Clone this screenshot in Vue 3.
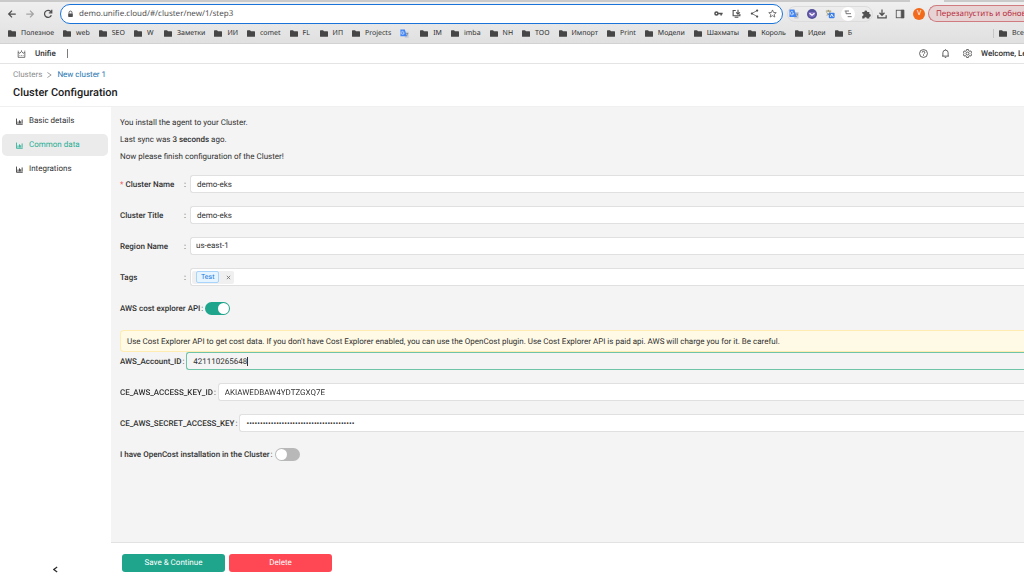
<script setup>
import { ref, onMounted } from 'vue'

const bookmarks = [
  'Полезное', 'web', 'SEO', 'W', 'Заметки', 'ИИ', 'comet', 'FL', 'ИП', 'Projects', null,
  'IM', 'imba', 'NH', 'ТОО', 'Импорт', 'Print', 'Модели', 'Шахматы', 'Король', 'Идеи', 'Б'
]
const menu = [
  { title: 'Basic details', active: false },
  { title: 'Common data', active: true },
  { title: 'Integrations', active: false }
]
const url = ref('demo.unifie.cloud/#/cluster/new/1/step3')
const name = ref('demo-eks')
const title = ref('demo-eks')
const region = ref('us-east-1')
const costExplorer = ref(true)
const openCost = ref(false)
const accountId = ref('421110265648')
const accessKey = ref('AKIAWEDBAW4YDTZGXQ7E')
const secretKey = ref('0000000000000000000000000000000000000000')
const accountInput = ref(null)

onMounted(() => {
  const el = accountInput.value
  el.focus()
  el.setSelectionRange(el.value.length, el.value.length)
})
</script>

<template>
  <div class="window">
    <header class="chrome">
      <div class="tabstrip"><span class="tab"></span></div>
      <div class="toolbar">
        <div class="nav">
          <button aria-label="Back"><svg viewBox="0 0 24 24"><path d="M21 12H4M12 4l-8 8 8 8" /></svg></button>
          <button aria-label="Forward" class="dim"><svg viewBox="0 0 24 24"><path d="M3 12h17M12 4l8 8-8 8" /></svg></button>
          <button aria-label="Reload"><svg viewBox="0 0 24 24"><path d="M20 15a8.500 8.500 0 1 1-1.500-9L21 8.500M21 2v7h-7" /></svg></button>
        </div>
        <div class="omnibox">
          <svg class="lock" viewBox="0 0 24 24"><path d="M7 11V7a5 5 0 0 1 10 0v4" fill="none" stroke="currentColor" stroke-width="3" /><rect x="4" y="10" width="16" height="12" rx="2" fill="currentColor" /></svg>
          <input v-model="url" aria-label="Address" />
          <button aria-label="Passwords"><svg viewBox="0 0 24 24"><circle cx="6.500" cy="12" r="4" stroke-width="4" /><path d="M11 12h12M19 12v5" stroke-width="4" /></svg></button>
          <button aria-label="Install"><svg viewBox="0 0 24 24"><path d="M10 4H3v14h18v-5M7 22h10M16 2v11M11 9l5 5 5-5" stroke-width="3" /></svg></button>
          <button aria-label="Share"><svg viewBox="0 0 24 24"><path d="M19 4L5 12l14 8" stroke-width="2" /><g fill="currentColor" stroke="none"><circle cx="19" cy="4" r="3" /><circle cx="5" cy="12" r="3" /><circle cx="19" cy="20" r="3" /></g></svg></button>
          <button aria-label="Bookmark"><svg viewBox="0 0 24 24"><path d="M12 2.500l2.800 6.700 7.200.6-5.500 4.700 1.700 7-6.200-3.800-6.200 3.800 1.700-7L2 9.800l7.200-.6z" stroke-width="2" /></svg></button>
        </div>
        <div class="extensions">
          <button aria-label="Translate"><svg viewBox="0 0 24 24"><path d="M9 7h14v16H13z" fill="#c4cad4" stroke="none" /><path d="M1 1h12l5 18H1z" fill="#4285f4" stroke="none" /><path d="M11 10a4 4 0 1 1-1.500-3M7 10h4" stroke="#fff" stroke-width="1.500" /><path d="M16 12h6M20 12c0 3-1 5-3 7" stroke="#61718a" stroke-width="1.500" /></svg></button>
          <button aria-label="Pocket"><svg viewBox="0 0 24 24"><circle cx="12" cy="12" r="12" fill="#53509c" stroke="none" /><path d="M4 7h16v5a8 8 0 0 1-16 0z" fill="#7d6bbd" stroke="none" /><path d="M6 10l6 5 6-5" stroke="#fff" stroke-width="3" /></svg></button>
          <button aria-label="Dictionary"><svg viewBox="0 0 24 24"><path d="M2 5h13M8 2v4M4 15c5-2 8-5 8-9M4 8c2 4 5 6 8 7" stroke="#8c8352" stroke-width="2" /><rect x="9" y="9" width="14" height="13" rx="2" fill="#3c7ee8" stroke="none" /><path d="M13 19l3-7 4 7" stroke="#fff" stroke-width="2" /></svg></button>
          <button aria-label="Outline" class="round"><svg viewBox="0 0 24 24"><path d="M2 3h13M8 11h13M11 20h12M6 3v8h4" stroke="#7b7b7b" /></svg></button>
          <button aria-label="Extensions"><svg viewBox="0 0 24 24"><path d="M3 7h5a3.500 3.500 0 1 1 7 0h5v5a3.500 3.500 0 1 1 0 7v4h-6a3 3 0 1 0-6 0H3v-6a3 3 0 1 0 0-6z" fill="currentColor" stroke="none" /></svg></button>
        </div>
        <div class="tools">
          <button aria-label="Downloads"><svg viewBox="0 0 24 24"><path d="M12 1v14M6 9l6 6 6-6M2 15v6h20v-6" /></svg></button>
          <button aria-label="Side panel"><svg viewBox="0 0 24 24"><rect x="3" y="3" width="18" height="18" stroke-width="2" /><path d="M15 3h6v18h-6z" fill="currentColor" stroke-width="2" /></svg></button>
          <button aria-label="Profile" class="avatar">V</button>
        </div>
        <button class="restart">Перезапустить и обновить</button>
      </div>
      <nav class="bookmarks" aria-label="Bookmarks">
        <template v-for="(b, i) in bookmarks" :key="i">
          <a v-if="b" href="#"><svg viewBox="0 0 24 20"><path d="M0 2q0-2 2-2h7l3 3h10q2 0 2 2v13q0 2-2 2H2q-2 0-2-2z" fill="currentColor" /></svg>{{ b }}</a>
          <a v-else href="#" class="site" aria-label="Translate"><svg viewBox="0 0 24 24"><path d="M9 7h14v16H13z" fill="#c4cad4" /><path d="M1 1h12l5 18H1z" fill="#4285f4" /><path d="M11 10a4 4 0 1 1-1.500-3M7 10h4" fill="none" stroke="#fff" stroke-width="1.500" /><path d="M16 12h6M20 12c0 3-1 5-3 7" fill="none" stroke="#61718a" stroke-width="1.500" /></svg></a>
        </template>
        <a class="all" href="#"><svg viewBox="0 0 24 20"><path d="M0 2q0-2 2-2h7l3 3h10q2 0 2 2v13q0 2-2 2H2q-2 0-2-2z" fill="currentColor" /></svg>Все закладки</a>
      </nav>
    </header>

    <div class="appbar">
      <svg class="logo" viewBox="0 0 24 24"><path d="M2 6l5 4 5-6 5 6 5-4v16H2zM7 16v2M12 16v2M17 16v2M2 5V2M12 3V1M22 5V2" /></svg>
      <strong>Unifie</strong><span class="bar"></span>
      <div class="user">
        <button aria-label="Help"><svg viewBox="0 0 24 24"><circle cx="12" cy="12" r="10.500" /><path d="M8.500 9.500a3.500 3.500 0 1 1 5 3q-1.500.8-1.500 2.500M12 16.500v2" /></svg></button>
        <button aria-label="Notifications"><svg viewBox="0 0 24 24"><path d="M3 19h18M5 19v-9a7 7 0 0 1 14 0v9M12 1v2M10 22.500h4" /></svg></button>
        <button aria-label="Settings"><svg viewBox="0 0 24 24"><path d="M9.500 1.500h5l1 3.500 2 1.200 3.500-1 2.300 4.300-2.600 2.500 2.600 2.500-2.300 4.300-3.500-1-2 1.200-1 3.500h-5l-1-3.500-2-1.200-3.500 1L.7 14.500 3.300 12 .7 9.500 3 5.200l3.500 1 2-1.200z" /><circle cx="12" cy="12" r="4" /></svg></button>
        <strong>Welcome, Leonid</strong>
      </div>
    </div>

    <div class="heading">
      <nav class="crumbs" aria-label="Breadcrumb">
        <a href="#">Clusters</a>
        <svg viewBox="0 0 12 16"><path d="M1 2l9 6-9 6" /></svg>
        <a href="#" class="here">New cluster 1</a>
      </nav>
      <h1>Cluster Configuration</h1>
    </div>

    <div class="body">
      <aside>
        <nav class="menu" aria-label="Steps">
          <a v-for="m in menu" :key="m.title" href="#" :class="{ active: m.active }">
            <svg viewBox="0 0 24 24"><path d="M1.500 2v19.500H23M7 19v-7M12 19V8M16 19v-8M21 19V5" stroke-width="3" /></svg>{{ m.title }}
          </a>
        </nav>
        <button class="collapse" aria-label="Collapse menu"><svg viewBox="0 0 12 16"><path d="M10 2L2 8l8 6" stroke-width="3" /></svg></button>
      </aside>

      <main>
        <form @submit.prevent>
          <div class="intro">
            <p>You install the agent to your Cluster.</p>
            <p>Last sync was <strong>3 seconds</strong> ago.</p>
            <p>Now please finish configuration of the Cluster!</p>
          </div>
          <div class="row">
            <label for="name" class="fixed"><span><i>*</i> Cluster Name</span><b>:</b></label>
            <input id="name" v-model="name" class="field" />
          </div>
          <div class="row">
            <label for="title" class="fixed"><span>Cluster Title</span><b>:</b></label>
            <input id="title" v-model="title" class="field" />
          </div>
          <div class="row">
            <label for="region" class="fixed"><span>Region Name</span><b>:</b></label>
            <select id="region" v-model="region" class="field"><option>us-east-1</option></select>
          </div>
          <div class="row">
            <label for="tags" class="fixed"><span>Tags</span><b>:</b></label>
            <div class="field tags">
              <span class="chip"><em>Test</em><button type="button" aria-label="Remove Test"><svg viewBox="0 0 12 12"><path d="M2 2l8 8M10 2l-8 8" /></svg></button></span>
              <input id="tags" />
            </div>
          </div>
          <div class="row">
            <label for="ce">AWS cost explorer API<b>:</b></label>
            <input id="ce" v-model="costExplorer" type="checkbox" role="switch" class="switch" />
          </div>
          <div class="alert" role="alert">Use Cost Explorer API to get cost data. If you don't have Cost Explorer enabled, you can use the OpenCost plugin. Use Cost Explorer API is paid api. AWS will charge you for it. Be careful.</div>
          <div class="row">
            <label for="account">AWS_Account_ID<b>:</b></label>
            <div class="field focused">
              <input id="account" ref="accountInput" v-model="accountId" /><span class="caret"></span>
            </div>
          </div>
          <div class="row">
            <label for="access">CE_AWS_ACCESS_KEY_ID<b>:</b></label>
            <input id="access" v-model="accessKey" class="field" />
          </div>
          <div class="row">
            <label for="secret">CE_AWS_SECRET_ACCESS_KEY<b>:</b></label>
            <input id="secret" v-model="secretKey" type="password" class="field" />
          </div>
          <div class="row">
            <label for="oc">I have OpenCost installation in the Cluster<b>:</b></label>
            <input id="oc" v-model="openCost" type="checkbox" role="switch" class="switch" />
          </div>
        </form>
        <footer>
          <button class="save">Save &amp; Continue</button>
          <button class="delete">Delete</button>
        </footer>
      </main>
    </div>
  </div>
</template>

<style>
body { margin: 0; overflow: hidden; }
</style>

<style scoped>
.window {
  display: flex;
  flex-direction: column;
  min-height: 100vh;
  overflow: hidden;
  background: #fff;
  color: #303030;
  font: 8px/12px Roboto, sans-serif;
  text-rendering: geometricPrecision;
}
* { box-sizing: border-box; }
button, input, select { margin: 0; padding: 0; border: 0; background: none; color: inherit; font: inherit; text-rendering: inherit; outline: none; }
a { color: inherit; text-decoration: none; }
svg { display: block; fill: none; stroke: currentColor; stroke-width: 2; flex: none; }

.chrome { color: #505050; background: linear-gradient(#f0f0f0, #e0e0e0); border-bottom: 1px solid #d2d2d2; font-family: "Noto Sans", sans-serif; }
.tabstrip { height: 2px; background: #cacaca; display: flex; justify-content: flex-end; padding-right: 80px; }
.tab { width: 34px; background: #eee; }
.toolbar { display: flex; align-items: center; height: 23px; white-space: nowrap; }
.toolbar svg { width: 10px; height: 10px; stroke-width: 3; }
.nav { display: flex; gap: 8px; padding: 0 7px; }
.dim { color: #a4a4a4; }
.omnibox { display: flex; align-items: center; flex: 1; gap: 8px; height: 20px; padding: 0 5px 0 6px; border: 1px solid #1a73d9; border-radius: 10px; background: #fff; }
.omnibox svg { width: 9px; height: 9px; }
.omnibox .lock { width: 7px; height: 8px; margin-right: -3px; stroke: none; }
.omnibox input { flex: 1; min-width: 0; color: #505050; }
.omnibox button + button { margin-left: 1px; }
.extensions { display: flex; align-items: center; gap: 8px; height: 16px; margin-left: 4px; padding: 0 1px; border: 1px solid #dcdcdc; border-radius: 8px; }
.extensions .round { display: grid; place-items: center; width: 14px; height: 14px; margin: 0 -2px; border-radius: 50%; background: #fff; }
.extensions .round svg { width: 8px; height: 8px; }
.tools { display: flex; align-items: center; gap: 8px; padding: 0 3px 0 4px; }
.avatar { width: 12px; height: 12px; border-radius: 50%; background: #f26a1b; color: #fff; font-size: 7px; line-height: 12px; }
.restart { flex: none; width: 96px; height: 17px; padding-left: 7px; border: 1px solid #cf7b80; border-right: 0; border-radius: 9px 0 0 9px; background: #e7d3d4; color: #b82d3d; text-align: left; overflow: hidden; }
.bookmarks { display: flex; align-items: center; gap: 9px; height: 18px; padding: 0 0 1px 8px; font-size: 7px; white-space: nowrap; color: #303030; }
.bookmarks a { display: flex; align-items: center; gap: 5px; flex: none; min-width: 21px; }
.bookmarks svg { width: 8px; height: 7px; stroke: none; color: #464646; }
.bookmarks .site { min-width: 11px; }
.bookmarks .site svg { width: 9px; height: 9px; }
.bookmarks .all { width: 31px; margin-left: auto; padding-left: 5px; border-left: 1px solid #c6c6c6; height: 9px; }

.appbar { display: flex; align-items: center; height: 20px; padding-left: 17px; border-bottom: 1px solid #e4e4e4; }
.appbar strong { font-weight: 500; }
.logo { width: 9px; height: 8px; margin-right: 9px; }
.bar { width: 1px; height: 9px; margin-left: 11px; background: #7c7c7c; }
.user { display: flex; align-items: center; gap: 13px; margin-left: auto; width: 105px; white-space: nowrap; }
.user svg { width: 9px; height: 9px; }
.user strong { margin-left: -4px; }
.heading { padding: 5px 13px 0; height: 43px; border-bottom: 1px solid #f0f0f0; }
.crumbs { display: flex; align-items: center; gap: 5px; color: #8c8c8c; }
.crumbs svg { width: 5px; height: 8px; }
.here { color: #2475b0; }
h1 { margin: 4px 0 0; font-size: 11px; line-height: 16px; font-weight: 500; color: #202020; }

.body { display: flex; flex: 1; }
aside { display: flex; flex-direction: column; flex: none; width: 111px; padding: 3px 3px 3px 2px; }
.menu { display: flex; flex-direction: column; gap: 2px; }
.menu a { display: flex; align-items: center; gap: 6px; height: 22px; padding-left: 14px; border-radius: 5px; }
.menu svg { width: 7px; height: 7px; }
.menu .active { background: #ebebeb; color: #28ae93; }
.collapse { display: grid; place-items: center; width: 16px; height: 10px; margin: auto auto 0; }
.collapse svg { width: 5px; height: 7px; }

main { display: flex; flex-direction: column; flex: 1; min-width: 0; background: #f4f4f4; }
form { flex: 1; padding: 10px 0 0 9px; }
.intro { display: grid; gap: 5px; margin-bottom: 12px; }
p { margin: 0; }
p strong { font-weight: 500; }
.row { display: flex; align-items: center; height: 18px; margin-bottom: 13px; }
label { display: flex; flex: none; margin-right: 2px; padding-top: 2px; font-weight: 500; white-space: nowrap; }
label b { margin-left: 1px; font-weight: 400; }
label i { color: #f2555a; font-weight: 400; font-style: normal; }
.fixed { width: 66px; margin-right: 4px; justify-content: space-between; }
.field { flex: 1; min-width: 0; height: 18px; padding: 0 6px; border: 1px solid #e0e0e0; border-right: 0; border-radius: 3px 0 0 3px; background: #fff; }
select.field { appearance: none; padding: 0 5px; }
.focused { display: flex; align-items: center; background: #f4f4f4; border-color: #6fc3a7; }
.focused input { height: 16px; field-sizing: content; caret-color: transparent; }
.caret { width: 1px; height: 9px; background: #303030; }
.tags { display: flex; align-items: center; padding: 0 1px; }
.tags input { flex: 1; }
.chip { display: flex; align-items: center; gap: 7px; height: 13px; padding: 0 3px 0 4px; border-radius: 2px; background: #f0f0f0; }
.chip em { height: 12px; padding: 0 4px; border: 1px solid #a8d3fa; border-radius: 2px; background: #e6f4ff; color: #2078dd; font-style: normal; font-size: 7px; line-height: 11px; }
.chip svg { width: 5px; height: 5px; color: #707070; }
.switch { appearance: none; width: 25px; height: 13px; border-radius: 7px; background: #b8b8b8; padding: 1px; }
.switch::before { content: ""; display: block; width: 11px; height: 11px; border-radius: 50%; background: #fff; }
.switch:checked { background: #1fa58b; }
.switch:checked::before { margin-left: auto; }
.alert { height: 22px; padding: 5px 6px 3px; border: 1px solid #ffecb0; border-right: 0; border-radius: 4px 0 0 4px; background: #fffae6; white-space: nowrap; }
footer { display: flex; gap: 4px; height: 35px; padding: 11px 11px 0; border-top: 1px solid #e2e2e2; background: #fff; }
footer button { width: 103px; height: 18px; border-radius: 3px; color: #fff; }
.save { background: #1fa58b; }
.delete { background: #ff4854; }
</style>
